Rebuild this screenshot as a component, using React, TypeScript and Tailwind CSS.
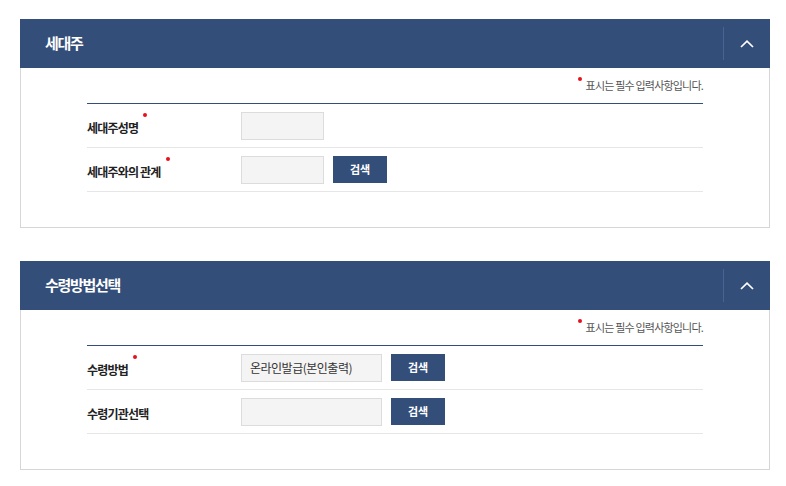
type Field = {
  label: string;
  required?: boolean;
  value?: string;
  inputWidth: string;
  search?: boolean;
};

const householdFields: Field[] = [
  { label: '세대주성명', required: true, inputWidth: 'w-[83px]' },
  { label: '세대주와의 관계', required: true, inputWidth: 'w-[83px]', search: true },
];

const receiveFields: Field[] = [
  { label: '수령방법', required: true, value: '온라인발급(본인출력)', inputWidth: 'w-[141px]', search: true },
  { label: '수령기관선택', inputWidth: 'w-[141px]', search: true },
];

function RequiredDot() {
  return <span className="absolute -right-[9px] -top-[6px] block w-[4px] h-[4px] rounded-full bg-[#e8101a]" />;
}

function FormRow({ field }: { field: Field }) {
  return (
    <div className="flex items-center h-[44px] border-b border-[#e6e6e6]">
      <div className="w-[154px] shrink-0">
        <span className="relative text-[12px] font-bold tracking-[-0.8px] text-[#222]">
          {field.label}
          {field.required && <RequiredDot />}
        </span>
      </div>
      <div className="flex items-center gap-[9px]">
        <div
          className={`${field.inputWidth} h-[28px] bg-[#f4f4f4] border border-[#dcdcdc] flex items-center px-[8px] text-[12px] text-[#333] tracking-[-0.5px]`}
        >
          {field.value}
        </div>
        {field.search && (
          <button className="w-[54px] h-[27px] bg-[#344e7a] text-white text-[11px] font-bold">검색</button>
        )}
      </div>
    </div>
  );
}

function Panel({ title, fields }: { title: string; fields: Field[] }) {
  return (
    <section className="w-[750px]">
      {/* Header */}
      <div className="flex items-center h-[49px] bg-[#344e7a]">
        <h2 className="flex-1 pl-[25px] text-[15px] font-bold tracking-[-1.3px] text-white">{title}</h2>
        <div className="w-px h-[33px] bg-[#4b6390]" />
        <button className="w-[46px] h-full flex items-center justify-center">
          <svg width="14" height="8" viewBox="0 0 14 8" fill="none">
            <polyline points="1,7 7,1.2 13,7" stroke="#fff" strokeWidth="1.7" />
          </svg>
        </button>
      </div>

      {/* Body */}
      <div className="border border-t-0 border-[#d6d6d6] px-[66px] pb-[35px]">
        <div className="h-[35px] flex items-center justify-end">
          <span className="relative pl-[8px] text-[11px] tracking-[-0.8px] text-[#555]">
            <span className="absolute left-0 top-0 block w-[4px] h-[4px] rounded-full bg-[#e8101a]" />
            표시는 필수 입력사항입니다.
          </span>
        </div>
        <div className="border-t border-[#344e7a]">
          {fields.map((f) => (
            <FormRow key={f.label} field={f} />
          ))}
        </div>
      </div>
    </section>
  );
}

export default function App() {
  return (
    <div
      className="min-h-[486px] bg-white pt-[19px] pl-[20px]"
      style={{ fontFamily: '"Noto Sans CJK KR", "Noto Sans", sans-serif' }}
    >
      <Panel title="세대주" fields={householdFields} />
      <div className="mt-[33px]">
        <Panel title="수령방법선택" fields={receiveFields} />
      </div>
    </div>
  );
}
